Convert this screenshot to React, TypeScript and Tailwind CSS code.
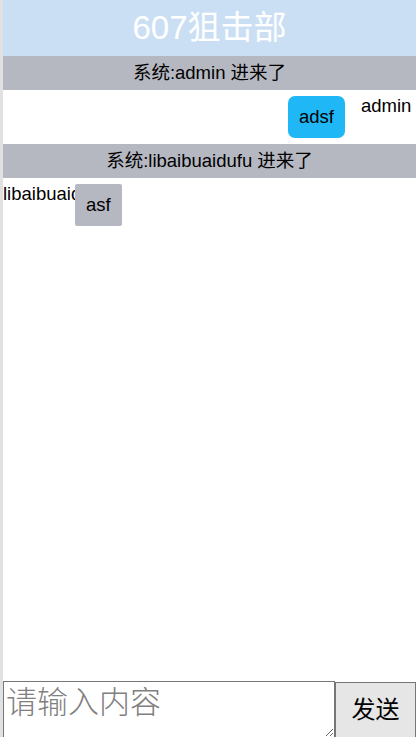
import React from 'react';

type Msg =
  | { kind: 'system'; text: string }
  | { kind: 'chat'; user: string; text: string; self: boolean };

const messages: Msg[] = [
  { kind: 'system', text: '系统:admin 进来了' },
  { kind: 'chat', user: 'admin', text: 'adsf', self: true },
  { kind: 'system', text: '系统:libaibuaidufu 进来了' },
  { kind: 'chat', user: 'libaibuaidufu', text: 'asf', self: false },
];

const font = { fontFamily: '"Liberation Sans", "Noto Sans CJK SC", sans-serif' };

const ChatRow: React.FC<{ user: string; text: string; self: boolean }> = ({ user, text, self }) => {
  if (self) {
    return (
      <div className="flex justify-end items-start pb-[6px]">
        <div className="mt-[6px] bg-[#1fb7f5] rounded-[7px] px-[11px] py-[10px] text-[18.5px] leading-[22px] text-black">
          {text}
        </div>
        <div className="mt-[6px] ml-[16px] w-[55px] text-[18.5px] leading-[20px] whitespace-nowrap overflow-hidden text-black">
          {user}
        </div>
      </div>
    );
  }
  return (
    <div className="flex items-start pb-[6px]">
      <div className="mt-[6px] w-[72px] text-[18.5px] leading-[20px] whitespace-nowrap overflow-hidden text-black">
        {user}
      </div>
      <div className="mt-[6px] bg-[#b6b8c1] rounded-[2px] px-[11px] py-[10px] text-[18.5px] leading-[22px] text-black">
        {text}
      </div>
    </div>
  );
};

export default function App() {
  return (
    <div className="h-[737px] w-[416px] flex flex-col bg-white border-l-[3px] border-[#e1e1e1] overflow-hidden" style={font}>
      <div className="h-[56px] flex items-center justify-center bg-[#cbdff4] text-white text-[33px]">
        607狙击部
      </div>
      <div className="flex-1 flex flex-col">
        {messages.map((m, i) =>
          m.kind === 'system' ? (
            <div key={i} className="h-[34px] flex items-center justify-center bg-[#b6b8c1] text-[18.5px] text-black">
              {m.text}
            </div>
          ) : (
            <ChatRow key={i} user={m.user} text={m.text} self={m.self} />
          )
        )}
      </div>
      <div className="flex items-start h-[56px]">
        <textarea
          placeholder="请输入内容"
          className="w-[332px] h-[57px] border border-[#767676] bg-white text-[31px] leading-[36px] px-[2px] py-0 placeholder:text-[#808080] outline-none"
          style={{ fontFamily: '"Noto Sans CJK SC", sans-serif', fontWeight: 300 }}
        />
        <button className="mt-[1px] flex-1 h-[56px] bg-[#e6e6e6] border border-[#767676] text-[24px] text-black">
          发送
        </button>
      </div>
    </div>
  );
}
